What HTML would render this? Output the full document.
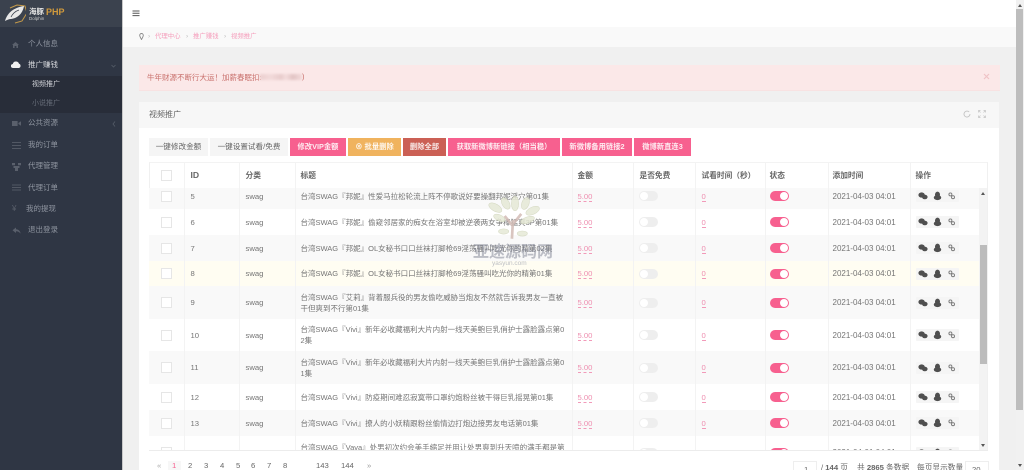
<!DOCTYPE html>
<html lang="zh"><head><meta charset="utf-8"><title>视频推广</title>
<style>
*{box-sizing:border-box}
html,body{margin:0;padding:0;width:1024px;height:470px;overflow:hidden;background:#f0f0f0}
body{font-family:"Liberation Sans","Noto Sans CJK SC",sans-serif;font-size:7.7px;color:#777}
#root{position:absolute;left:0;top:0;width:1024px;height:470px;overflow:hidden;filter:blur(.35px)}
.a{position:absolute}
.side{left:0;top:0;width:122px;height:470px;background:#2f3644}
.logo{left:0;top:0;width:122px;height:27px;background:#3b424e}
.sub{left:0;top:76px;width:122px;height:37px;background:#282d39}
.m{position:absolute;left:28px;font-size:7.5px;line-height:10px;color:#8f95a0;white-space:nowrap}
.i{position:absolute;left:11px;width:9px;height:9px}
.hd{left:123px;top:0;width:893px;height:27px;background:#fff}
.bc{left:123px;top:27px;width:893px;height:20px;background:#f9f9f9;font-size:6.4px;line-height:20px;color:#f59dbb}
.bc span{position:absolute;top:0;white-space:nowrap}
.alert{left:139px;top:65px;width:861px;height:26px;background:#fbe8e8;color:#c9716d;font-size:7.5px;line-height:25px;padding-left:8px;border-bottom:1px solid #f8e2e2}
.panel{left:139px;top:102px;width:860px;height:368px;background:#fff}
.ptitle{left:139px;top:102px;width:860px;height:26px;background:#f7f7f7;color:#666;font-size:8px;line-height:26px;padding-left:10px}
.b{position:absolute;top:138px;height:18px;line-height:18px;text-align:center;font-size:7.3px;color:rgba(255,255,255,.88);white-space:nowrap;background:#f7608f;font-weight:bold}
.b.g{background:#f5f5f5;color:#666;font-weight:normal;font-size:7.6px}
table{border-collapse:collapse;table-layout:fixed;position:absolute}
td,th{padding:0 0 0 6px;border-right:1px solid #f3f3f3;vertical-align:middle;font-weight:normal;overflow:hidden;white-space:nowrap;line-height:11px;text-align:left;color:#757575}
th{color:#666;font-weight:bold;font-size:7.7px;height:27px;padding-bottom:0}
th b{font-size:8.6px}
tr.o td{background:#f9f9f9}
tr.w td{background:#fff}
tr.y td{background:#fffdf2}
td.t{padding-left:5px;font-size:7.5px}
td.d{padding-left:4px;font-size:8px}
td.s,th.s{padding-left:4px}
.cb{display:block;width:11px;height:11px;border:1px solid #e6e6e6;background:#fff;margin-left:6px}
.p{color:#ee8fb0;border-bottom:1px dashed #f29ab9;display:inline-block;line-height:9px;font-size:7.7px}
.off,.on{display:block;width:19px;height:10px;border-radius:5px;position:relative}
.off{background:#eee;margin-left:-1px}.on{background:#f7608f}
.off:after,.on:after{content:"";position:absolute;top:1px;width:8px;height:8px;border-radius:50%;background:#fff}
.off:after{left:1px}.on:after{right:1px}
.ac{display:block;width:43px;height:12px;background:#f5f5f5;border-radius:1px;position:relative}
.ac svg{position:absolute;left:0;top:0}
.box{left:149px;top:162px;width:839px;height:288px;border:1px solid #f0f0f0;border-top:1px solid #f3f3f3;background:#fff}
.clip{left:149px;top:188px;width:830px;height:262px;overflow:hidden}
.pg{position:absolute;top:460px;height:12px;line-height:12px;font-size:7.7px;color:#666;white-space:nowrap}
</style></head><body><div id="root">
<svg width="0" height="0" style="position:absolute"><defs>
<symbol id="acts" viewBox="0 0 43 12">
<ellipse cx="5.6" cy="5" rx="3.2" ry="2.6" fill="#4f4f4f"/><ellipse cx="8.8" cy="7" rx="2.8" ry="2.3" fill="#4f4f4f"/>
<ellipse cx="21.5" cy="4.6" rx="2.5" ry="3" fill="#4f4f4f"/><ellipse cx="21.5" cy="7.6" rx="3.7" ry="2.5" fill="#4f4f4f"/>
<circle cx="34.4" cy="4.4" r="1.5" fill="none" stroke="#777" stroke-width=".9"/><circle cx="37" cy="7.2" r="1.5" fill="none" stroke="#777" stroke-width=".9"/>
</symbol></defs></svg>

<div class="a side"></div>
<div class="a logo"></div>
<svg class="a" style="left:4px;top:4px" width="22" height="20" viewBox="0 0 22 20"><path d="M6 4L13 1 21 2 23 9 18 17 11 19" fill="none" stroke="#c59a4a" stroke-width="1"/><path d="M1 17C3 10 8 4 20 2 19 8 15 14 7 15 5 15 3 16 1 17z" fill="#e8e8e8"/><path d="M7 13C9 9 12 7 15 6" stroke="#3b424e" stroke-width=".8" fill="none"/></svg>
<div class="a" style="left:29px;top:7px;font-size:7.5px;line-height:10px;color:#e4e4e4;font-weight:bold">海豚</div>
<div class="a" style="left:46px;top:6px;font-size:9px;line-height:12px;color:#d19a3c;font-weight:bold">PHP</div>
<div class="a" style="left:29px;top:16px;font-size:4.5px;line-height:6px;color:#ccc">Dolphin</div>

<div class="a sub"></div>
<svg class="i" style="top:40px" viewBox="0 0 9 9"><path d="M1 5L4.5 2 8 5H7V8H5.4V6H3.6V8H2V5z" fill="#5a606c"/></svg>
<div class="m" style="top:39px">个人信息</div>
<svg class="i" style="top:60px;width:10px" viewBox="0 0 10 9"><path d="M2 8A2 2 0 0 1 1.8 4 3.2 3.2 0 0 1 8 3.8 2.2 2.2 0 0 1 8 8z" fill="#f0f0f0"/></svg>
<div class="m" style="top:60px;color:#d8dade">推广赚钱</div>
<svg class="a" style="left:111px;top:64px" width="5" height="4" viewBox="0 0 5 4"><path d="M.5 1L2.5 3 4.5 1" stroke="#555c68" fill="none" stroke-width=".8"/></svg>
<div class="m" style="left:32px;top:80px;font-size:7px;color:#d3d5da">视频推广</div>
<div class="m" style="left:32px;top:99px;font-size:7px;color:#666c78">小说推广</div>
<svg class="i" style="top:119px;left:12px" viewBox="0 0 9 9"><path d="M0 2H5.6V7H0zM6.4 4L9 2.2V6.8L6.4 5z" fill="#5a606c"/></svg>
<div class="m" style="top:118px">公共资源</div>
<svg class="a" style="left:112px;top:121px" width="4" height="6" viewBox="0 0 4 6"><path d="M3 .5L1 3 3 5.5" stroke="#555c68" fill="none" stroke-width=".8"/></svg>
<svg class="i" style="top:141px;left:12px" viewBox="0 0 9 9"><path d="M0 1.5H9M0 4.5H9M0 7.5H9" stroke="#525864" stroke-width="1"/></svg>
<div class="m" style="top:140px">我的订单</div>
<svg class="i" style="top:162px;left:12px" viewBox="0 0 9 9"><path d="M0 1H3V3.2H0zM6 1H9V3.2H6zM1.5 4H7.5V6H1.5zM3 6H6V9H3z" fill="#5a606c"/></svg>
<div class="m" style="top:161px">代理管理</div>
<svg class="i" style="top:183px;left:12px" viewBox="0 0 9 9"><path d="M0 2H9M0 4.5H9M0 7H9" stroke="#525864" stroke-width=".9"/></svg>
<div class="m" style="top:183px">代理订单</div>
<div class="m" style="left:12px;top:204px;color:#5a606c;font-size:8px">¥</div>
<div class="m" style="left:26px;top:204px">我的提现</div>
<svg class="i" style="top:226px;left:12px" viewBox="0 0 9 9"><path d="M4 1.5L.5 4.3 4 7V5.2C6 5.2 7.4 6 8.6 7.6 8.2 5 6.5 3.4 4 3.3z" fill="#5a606c"/></svg>
<div class="m" style="top:225px">退出登录</div>
<div class="a" style="left:122px;top:0;width:1px;height:470px;background:#c8c8c8"></div>

<div class="a hd"></div>
<svg class="a" style="left:132px;top:10px" width="8" height="7" viewBox="0 0 8 7"><path d="M.5 1H7.5M.5 3.3H7.5M.5 5.6H7.5" stroke="#555" stroke-width="1"/></svg>
<div class="a bc">
<svg class="a" style="left:16px;top:6px" width="5" height="7" viewBox="0 0 5 7"><path d="M2.5.5A1.8 1.8 0 0 1 4.3 2.3C4.3 3.5 2.5 6.5 2.5 6.5S.7 3.5.7 2.3A1.8 1.8 0 0 1 2.5.5z" fill="none" stroke="#888" stroke-width=".9"/></svg>
<span style="left:25px;color:#bbb">›</span><span style="left:32px">代理中心</span>
<span style="left:63px;color:#bbb">›</span><span style="left:70px">推广赚钱</span>
<span style="left:101px;color:#bbb">›</span><span style="left:108px">视频推广</span>
</div>

<div class="a alert">牛年财源不断行大运！加薪春眠扣:</div>
<div class="a" style="left:260px;top:74px;width:42px;height:6px;background:linear-gradient(90deg,#ecd0d0,#f2dada 25%,#e8cccc 50%,#f3dcdc 62%,#e2c4c4 78%,#f2dada);filter:blur(1px)"></div>
<div class="a" style="left:302px;top:72px;font-size:7.5px;line-height:10px;color:#c9716d">)</div>
<svg class="a" style="left:983px;top:73px" width="7" height="7" viewBox="0 0 7 7"><path d="M1 1L6 6M6 1L1 6" stroke="#efc3c6" stroke-width="1.2"/></svg>

<div class="a panel"></div>
<div class="a ptitle">视频推广</div>
<svg class="a" style="left:963px;top:110px" width="8" height="8" viewBox="0 0 8 8"><path d="M6.2 2A3 3 0 1 0 7 4" fill="none" stroke="#c4c4c4" stroke-width=".9"/></svg>
<svg class="a" style="left:978px;top:110px" width="8" height="8" viewBox="0 0 8 8"><path d="M.5 2.5V.5H2.5M5.5.5H7.5V2.5M7.5 5.5V7.5H5.5M2.5 7.5H.5V5.5M.5.5L2.5 2.5M7.5.5L5.5 2.5M7.5 7.5L5.5 5.5M.5 7.5L2.5 5.5" fill="none" stroke="#c4c4c4" stroke-width=".7"/></svg>

<div class="b g" style="left:149px;width:59px">一键修改金额</div>
<div class="b g" style="left:210px;width:78px">一键设置试看/免费</div>
<div class="b" style="left:290px;width:56px">修改VIP金额</div>
<div class="b" style="left:348px;width:53px;background:#f0b35e">⊗ 批量删除</div>
<div class="b" style="left:403px;width:43px;background:#cb6055">删除全部</div>
<div class="b" style="left:448px;width:112px">获取新微博新链接（相当稳）</div>
<div class="b" style="left:562px;width:70px">新微博备用链接2</div>
<div class="b" style="left:634px;width:57px">微博新直连3</div>

<div class="a box"></div>
<table style="left:149px;top:162px;width:839px"><colgroup><col style="width:35px"><col style="width:55px"><col style="width:56px"><col style="width:277px"><col style="width:61px"><col style="width:62px"><col style="width:70px"><col style="width:63px"><col style="width:82px"><col style="width:78px"></colgroup>
<tr class="w"><th style="padding-left:6px"><i class="cb" style="margin-left:6px"></i></th><th><b>ID</b></th><th>分类</th><th style="padding-left:5px">标题</th><th style="padding-left:5px">金额</th><th>是否免费</th><th>试看时间（秒）</th><th class="s">状态</th><th class="s">添加时间</th><th style="padding-left:5px;border-right:0">操作</th></tr></table>

<div class="a clip">
<table style="left:0;top:-5px;width:830px"><colgroup><col style="width:35px"><col style="width:55px"><col style="width:56px"><col style="width:277px"><col style="width:61px"><col style="width:62px"><col style="width:70px"><col style="width:63px"><col style="width:82px"><col style="width:69px"></colgroup>
<tr class="o" style="height:26px"><td><i class="cb"></i></td><td>5</td><td>swag</td><td class="t">台湾SWAG『邦妮』性爱马拉松轮流上阵不停歌说好要操翻邦妮淫穴第01集</td><td class="t"><span class="p">5.00</span></td><td><i class="off"></i></td><td><span class="p">0</span></td><td class="s"><i class="on"></i></td><td class="d">2021-04-03 04:01</td><td class="t"><i class="ac"><svg width="43" height="12"><use href="#acts"/></svg></i></td></tr>
<tr class="w" style="height:26px"><td><i class="cb"></i></td><td>6</td><td>swag</td><td class="t">台湾SWAG『邦妮』偷窥邻居家的痴女在浴室却被逆袭两女争棒猛爽3P第01集</td><td class="t"><span class="p">5.00</span></td><td><i class="off"></i></td><td><span class="p">0</span></td><td class="s"><i class="on"></i></td><td class="d">2021-04-03 04:01</td><td class="t"><i class="ac"><svg width="43" height="12"><use href="#acts"/></svg></i></td></tr>
<tr class="o" style="height:26px"><td><i class="cb"></i></td><td>7</td><td>swag</td><td class="t">台湾SWAG『邦妮』OL女秘书口口丝袜打脚枪69淫荡骚叫吃光你的精第02集</td><td class="t"><span class="p">5.00</span></td><td><i class="off"></i></td><td><span class="p">0</span></td><td class="s"><i class="on"></i></td><td class="d">2021-04-03 04:01</td><td class="t"><i class="ac"><svg width="43" height="12"><use href="#acts"/></svg></i></td></tr>
<tr class="y" style="height:25px"><td><i class="cb"></i></td><td>8</td><td>swag</td><td class="t">台湾SWAG『邦妮』OL女秘书口口丝袜打脚枪69淫荡骚叫吃光你的精第01集</td><td class="t"><span class="p">5.00</span></td><td><i class="off"></i></td><td><span class="p">0</span></td><td class="s"><i class="on"></i></td><td class="d">2021-04-03 04:01</td><td class="t"><i class="ac"><svg width="43" height="12"><use href="#acts"/></svg></i></td></tr>
<tr class="o" style="height:33px"><td><i class="cb"></i></td><td>9</td><td>swag</td><td class="t">台湾SWAG『艾莉』背着服兵役的男友偷吃威胁当炮友不然就告诉我男友一直被<br>干但爽到不行第01集</td><td class="t"><span class="p">5.00</span></td><td><i class="off"></i></td><td><span class="p">0</span></td><td class="s"><i class="on"></i></td><td class="d">2021-04-03 04:01</td><td class="t"><i class="ac"><svg width="43" height="12"><use href="#acts"/></svg></i></td></tr>
<tr class="w" style="height:32px"><td><i class="cb"></i></td><td>10</td><td>swag</td><td class="t">台湾SWAG『Vivi』新年必收藏福利大片内射一线天美鲍巨乳俏护士露脸露点第0<br>2集</td><td class="t"><span class="p">5.00</span></td><td><i class="off"></i></td><td><span class="p">0</span></td><td class="s"><i class="on"></i></td><td class="d">2021-04-03 04:01</td><td class="t"><i class="ac"><svg width="43" height="12"><use href="#acts"/></svg></i></td></tr>
<tr class="o" style="height:33px"><td><i class="cb"></i></td><td>11</td><td>swag</td><td class="t">台湾SWAG『Vivi』新年必收藏福利大片内射一线天美鲍巨乳俏护士露脸露点第0<br>1集</td><td class="t"><span class="p">5.00</span></td><td><i class="off"></i></td><td><span class="p">0</span></td><td class="s"><i class="on"></i></td><td class="d">2021-04-03 04:01</td><td class="t"><i class="ac"><svg width="43" height="12"><use href="#acts"/></svg></i></td></tr>
<tr class="w" style="height:26px"><td><i class="cb"></i></td><td>12</td><td>swag</td><td class="t">台湾SWAG『Vivi』防疫期间难忍寂寞带口罩约炮粉丝被干得巨乳摇晃第01集</td><td class="t"><span class="p">5.00</span></td><td><i class="off"></i></td><td><span class="p">0</span></td><td class="s"><i class="on"></i></td><td class="d">2021-04-03 04:01</td><td class="t"><i class="ac"><svg width="43" height="12"><use href="#acts"/></svg></i></td></tr>
<tr class="o" style="height:26px"><td><i class="cb"></i></td><td>13</td><td>swag</td><td class="t">台湾SWAG『Vivi』撩人的小妖精跟粉丝偷情边打炮边接男友电话第01集</td><td class="t"><span class="p">5.00</span></td><td><i class="off"></i></td><td><span class="p">0</span></td><td class="s"><i class="on"></i></td><td class="d">2021-04-03 04:01</td><td class="t"><i class="ac"><svg width="43" height="12"><use href="#acts"/></svg></i></td></tr>
<tr class="w" style="height:33px"><td><i class="cb"></i></td><td>14</td><td>swag</td><td class="t">台湾SWAG『Vava』处男初次约会美手缩足并用让处男爽到升天喷的满手都是第<br>01集</td><td class="t"><span class="p">5.00</span></td><td><i class="off"></i></td><td><span class="p">0</span></td><td class="s"><i class="on"></i></td><td class="d">2021-04-01 04:01</td><td class="t"><i class="ac"><svg width="43" height="12"><use href="#acts"/></svg></i></td></tr>
</table></div>

<div class="a" style="left:979px;top:188px;width:8px;height:262px;background:#f3f3f3"></div>
<div class="a" style="left:980px;top:245px;width:7px;height:119px;background:#bcbcbc"></div>
<div class="a" style="left:981px;top:192px;width:0;height:0;border:2px solid transparent;border-bottom:3px solid #555;border-top:0"></div>
<div class="a" style="left:981px;top:444px;width:0;height:0;border:2px solid transparent;border-top:3px solid #555;border-bottom:0"></div>
<div class="a" style="left:149px;top:450px;width:839px;height:1px;background:#ececec"></div>

<svg class="a" style="left:486px;top:195px;opacity:.85" width="56" height="46" viewBox="0 0 54 44"><path d="M25 42L26 24M26 30L18 20M26 28L34 18" stroke="#d3bcb6" stroke-width="2.6" fill="none"/>
<g fill="#e6e9d6" stroke="#cdd2b8" stroke-width=".5"><ellipse cx="9" cy="12" rx="7" ry="3.5" transform="rotate(30 9 12)"/><ellipse cx="19" cy="8" rx="6" ry="3.5" transform="rotate(60 19 8)"/><ellipse cx="28" cy="8" rx="3.5" ry="7"/><ellipse cx="38" cy="8" rx="3.5" ry="6" transform="rotate(20 38 8)"/><ellipse cx="45" cy="15" rx="7" ry="3.5" transform="rotate(-25 45 15)"/><ellipse cx="40" cy="24" rx="7" ry="3" transform="rotate(-20 40 24)"/><ellipse cx="13" cy="22" rx="6" ry="3" transform="rotate(25 13 22)"/><ellipse cx="17" cy="35" rx="5" ry="2.5"/><ellipse cx="35" cy="37" rx="5" ry="2.5"/></g></svg>
<div class="a" style="left:473px;top:244px;font-size:16px;line-height:18px;font-weight:bold;color:rgba(125,130,145,.5);white-space:nowrap">亚速源码网</div>
<div class="a" style="left:492px;top:260px;font-size:6.5px;line-height:8px;color:#bdbfc4;white-space:nowrap">yasyun.com</div>

<div class="pg" style="left:157px;color:#aaa">«</div>
<div class="a" style="left:168px;top:461px;width:13px;height:9px;background:#f7f7f7"></div>
<div class="pg" style="left:172px;color:#f7608f">1</div>
<div class="pg" style="left:188px">2</div><div class="pg" style="left:204px">3</div><div class="pg" style="left:220px">4</div><div class="pg" style="left:236px">5</div><div class="pg" style="left:251px">6</div><div class="pg" style="left:267px">7</div><div class="pg" style="left:283px">8</div>
<div class="pg" style="left:316px">143</div><div class="pg" style="left:341px">144</div><div class="pg" style="left:367px;color:#999">»</div>
<div class="a" style="left:793px;top:461px;width:24px;height:12px;border:1px solid #eee;background:#fff"></div>
<div class="pg" style="left:804px;top:464px">1</div>
<div class="pg" style="left:821px;top:462px">/ <b>144</b> 页</div>
<div class="pg" style="left:857px;top:462px">共 <b>2865</b> 条数据</div>
<div class="pg" style="left:917px;top:462px">每页显示数量</div>
<div class="a" style="left:965px;top:461px;width:24px;height:12px;border:1px solid #eee;background:#fff"></div>
<div class="pg" style="left:972px;top:464px">20</div>

<div class="a" style="left:1016px;top:0;width:8px;height:470px;background:#f1f1f1"></div>
<div class="a" style="left:1016px;top:9px;width:7px;height:401px;background:#bdbdbd"></div>
<div class="a" style="left:1018px;top:4px;width:0;height:0;border:2px solid transparent;border-bottom:3px solid #555;border-top:0"></div>
<div class="a" style="left:1018px;top:464px;width:0;height:0;border:2px solid transparent;border-top:3px solid #555;border-bottom:0"></div>
</div></body></html>
